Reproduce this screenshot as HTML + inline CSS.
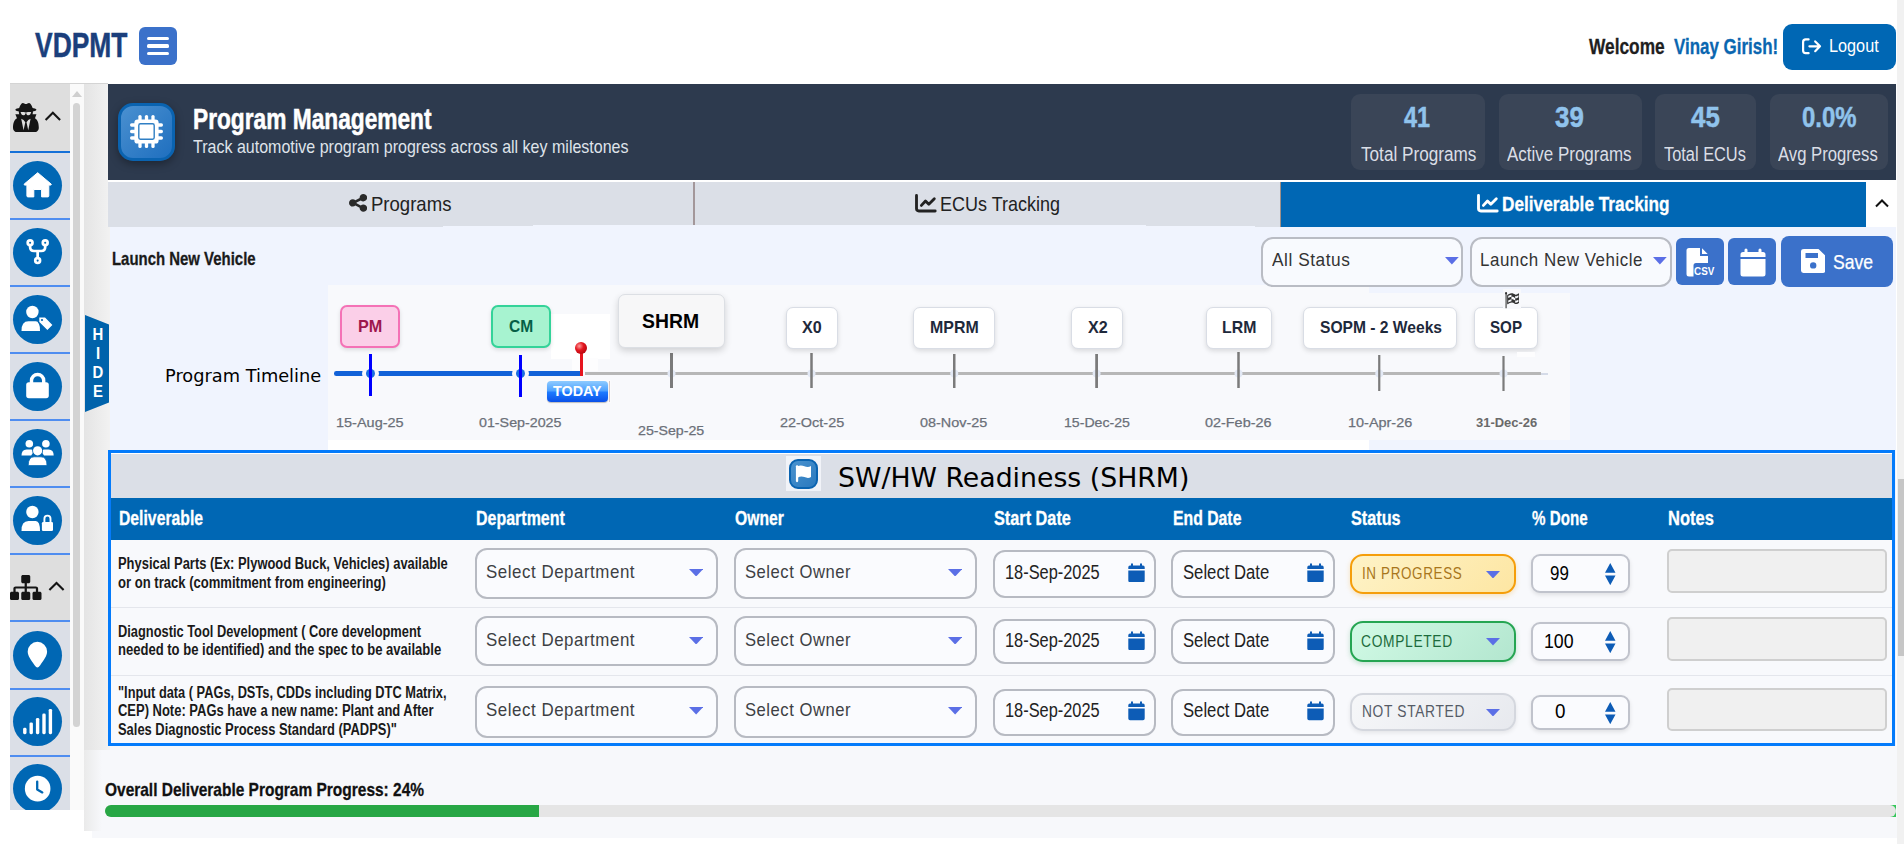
<!DOCTYPE html>
<html lang="en"><head><meta charset="utf-8"><title>VDPMT - Program Management</title>
<style>
html,body{margin:0;padding:0;}
body{width:1904px;height:844px;overflow:hidden;background:#fff;position:relative;font-family:"Liberation Sans",sans-serif;}
div,span.t,svg{position:absolute;box-sizing:border-box;}
span.t{white-space:nowrap;line-height:1;transform-origin:0 0;display:block;}
</style></head>
<body>
<div style="left:92px;top:746px;width:1805px;height:91.5px;background:#f7f8fb;"></div>
<div style="left:108px;top:226.5px;width:1788px;height:519.5px;background:#f0f4fe;"></div>
<div style="left:1897px;top:0px;width:7px;height:844px;background:#f1f1f1;"></div>
<div style="left:1897.5px;top:478.5px;width:6.5px;height:177.0px;background:#c6c6c6;"></div>
<div style="left:84px;top:84px;width:25.5px;height:665.6px;background:linear-gradient(90deg,#e4e4e4,#f2f2f2);"></div>
<div style="left:84px;top:749.6px;width:18px;height:81.4px;background:linear-gradient(90deg,#eaeaea,#f7f8fb);"></div>
<span class="t" id="t1" style="left:35.06px;top:28.00px;font-size:34.6px;color:#1b3f7c;font-weight:700;transform:scaleX(0.7644);-webkit-text-stroke:0.45px #1b3f7c;">VDPMT</span>
<div style="left:139px;top:27px;width:38px;height:38px;background:#3b71ca;border-radius:6px;"></div>
<div style="left:147px;top:36.5px;width:22px;height:3.5px;background:#fff;border-radius:1.5px;"></div>
<div style="left:147px;top:44px;width:22px;height:3.5px;background:#fff;border-radius:1.5px;"></div>
<div style="left:147px;top:51.5px;width:22px;height:3.5px;background:#fff;border-radius:1.5px;"></div>
<span class="t" id="t2" style="left:1588.77px;top:36.00px;font-size:22px;color:#1f1f1f;font-weight:700;transform:scaleX(0.7870);-webkit-text-stroke:0.3px #1f1f1f;">Welcome</span>
<span class="t" id="t3" style="left:1673.55px;top:36.00px;font-size:22px;color:#0a66b0;font-weight:700;transform:scaleX(0.7694);-webkit-text-stroke:0.3px #0a66b0;">Vinay Girish!</span>
<div style="left:1783px;top:24px;width:113px;height:45.5px;background:#0067b4;border-radius:9px;"></div>
<svg style="left:1801px;top:37px;" width="21" height="19" viewBox="0 0 21 19"><g fill="none" stroke="#fff" stroke-width="2.2" stroke-linecap="round" stroke-linejoin="round"><path d="M7.6 2.4H4.7Q2.1 2.4 2.1 5V13.6Q2.1 16.2 4.7 16.2H7.6"/><path d="M8.4 9.3H18.5M14.2 4.4L19 9.3L14.2 14.2"/></g></svg>
<span class="t" id="t4" style="left:1829.33px;top:37.00px;font-size:18.5px;color:#fff;transform:scaleX(0.8783);">Logout</span>
<div style="left:10px;top:83px;width:98px;height:1px;background:#d4d4d4;"></div>
<div style="left:10px;top:84px;width:60px;height:726px;background:#dbdfe7;"></div>
<div style="left:10px;top:84px;width:60px;height:67px;background:#dedede;"></div>
<div style="left:10px;top:555px;width:60px;height:65px;background:#dedede;"></div>
<div style="left:10px;top:151px;width:60px;height:2.2px;background:#1470d8;"></div>
<div style="left:10px;top:218px;width:60px;height:2.2px;background:#4f8df0;"></div>
<div style="left:10px;top:285px;width:60px;height:2.2px;background:#4f8df0;"></div>
<div style="left:10px;top:352px;width:60px;height:2.2px;background:#4f8df0;"></div>
<div style="left:10px;top:419px;width:60px;height:2.2px;background:#4f8df0;"></div>
<div style="left:10px;top:486px;width:60px;height:2.2px;background:#4f8df0;"></div>
<div style="left:10px;top:553px;width:60px;height:2.2px;background:#4f8df0;"></div>
<div style="left:10px;top:620.3px;width:60px;height:2.2px;background:#4f8df0;"></div>
<div style="left:10px;top:687.5px;width:60px;height:2.2px;background:#4f8df0;"></div>
<div style="left:10px;top:754.7px;width:60px;height:2.2px;background:#4f8df0;"></div>
<div style="left:70px;top:84px;width:14px;height:726px;background:#fafafa;"></div>
<div style="left:73px;top:103px;width:7px;height:624px;background:#d3d3d3;border-radius:3.5px;"></div>
<svg style="left:72px;top:91px;" width="10" height="6" viewBox="0 0 10 6"><path d="M0 6L5 0L10 6z" fill="#cfcfcf"/></svg>
<div style="left:12.9px;top:161.1px;width:49.0px;height:49.0px;background:#0067b4;border-radius:50%;"></div>
<div style="left:12.9px;top:227.9px;width:49.0px;height:49.0px;background:#0067b4;border-radius:50%;"></div>
<div style="left:12.9px;top:294.9px;width:49.0px;height:49.0px;background:#0067b4;border-radius:50%;"></div>
<div style="left:12.9px;top:361.9px;width:49.0px;height:49.0px;background:#0067b4;border-radius:50%;"></div>
<div style="left:12.9px;top:428.9px;width:49.0px;height:49.0px;background:#0067b4;border-radius:50%;"></div>
<div style="left:12.9px;top:495.9px;width:49.0px;height:49.0px;background:#0067b4;border-radius:50%;"></div>
<div style="left:12.9px;top:630.7px;width:49.0px;height:49.0px;background:#0067b4;border-radius:50%;"></div>
<div style="left:12.9px;top:697.4px;width:49.0px;height:49.0px;background:#0067b4;border-radius:50%;"></div>
<div style="left:12.9px;top:763.8px;width:49px;height:45.8px;overflow:hidden;"><div style="left:0;top:0;width:49px;height:49px;background:#0067b4;border-radius:50%;"></div></div>
<svg style="left:12.8px;top:102.5px;" width="25.8" height="29.4" viewBox="0.0 -1536.0 1408.0 1664.0" preserveAspectRatio="none"><path transform="scale(1,-1)" fill="#151515" d="M576 0 448 640 576 576 672 448ZM832 0 736 448 832 576 960 640ZM992 1010C991 1001 990 992 988 983C982 975 977 978 973 966C947 895 935 840 845 840C716 840 752 959 710 959H698C656 959 692 840 563 840C473 840 461 895 435 966C431 978 426 975 420 983C418 992 417 1001 416 1010C417 1012 418 1014 420 1016C429 1023 501 1024 516 1024C573 1024 627 1016 683 1005C690 1003 697 1003 704 1003C711 1003 718 1003 725 1005C781 1016 835 1024 892 1024C907 1024 979 1023 988 1016C990 1014 991 1012 992 1010ZM1408 131C1408 309 1377 578 1198 671L1280 896H1066C1084 948 1091 1002 1086 1056C1125 1064 1280 1096 1280 1152C1280 1211 1110 1243 1070 1251C1049 1326 999 1440 948 1499C928 1522 903 1536 872 1536C812 1536 764 1474 704 1474C644 1474 596 1536 536 1536C505 1536 480 1522 460 1499C409 1440 359 1326 338 1251C298 1243 128 1211 128 1152C128 1096 283 1064 322 1056C321 1046 320 1035 320 1024C320 980 328 937 342 896H128L218 676C32 586 0 312 0 131C0 -32 107 -128 267 -128H1141C1301 -128 1408 -32 1408 131Z"/></svg>
<svg style="left:0px;top:84px;" width="84" height="760" viewBox="0 84 84 760"><g fill="none" stroke="#151515" stroke-width="2.1"><path d="M45.6 120L52.85 112.8L60.1 120"/><path d="M49.4 590L56.5 582.9L63.6 590"/></g><path transform="translate(23 171.9)" fill="#fff" stroke="#fff" stroke-width="1" stroke-linejoin="round" d="M14.7 0.8L28.2 12.2Q28.6 13 27.6 13.2H25.8V24Q25.8 25 24.8 25H18.6V17.6H10.8V25H4.9Q3.9 25 3.9 24V13.2H1.8Q0.8 13 1.2 12.2z"/><g transform="translate(26.5 239)" fill="none" stroke="#fff" stroke-width="2.7"><circle cx="3.6" cy="3.7" r="2.4"/><circle cx="18.7" cy="3.7" r="2.4"/><circle cx="11.15" cy="21.6" r="2.4"/><path d="M3.6 6.6V8Q3.6 12 7.6 12H14.7Q18.7 12 18.7 8V6.6M11.15 12V18.8"/></g><circle cx="32.4" cy="312" r="6.2" fill="#fff"/><path d="M21.5 331Q21.3 321.2 28.5 321.2H35.8Q40 321.2 40 331z" fill="#fff"/><path d="M38.6 316.8H45.3L53.4 324.9L47.4 330.9L38.6 322.3z" fill="#fff" stroke="#0067b4" stroke-width="1.4" stroke-linejoin="round"/><circle cx="42" cy="320" r="1.1" fill="#0067b4"/><rect x="26.2" y="382.3" width="22.6" height="15.9" rx="2.6" fill="#fff"/><path d="M31.5 384V380.6A6.1 6.1 0 0 1 43.7 380.6V384" fill="none" stroke="#fff" stroke-width="3.4"/><circle cx="32.4" cy="512" r="6.2" fill="#fff"/><path d="M21.5 531Q21.3 521 28.5 521H35.8Q40 521 40 531z" fill="#fff"/><rect x="41" y="521.2" width="12.8" height="10.6" rx="1.6" fill="#0067b4"/><rect x="41.9" y="521.9" width="11.1" height="9.1" rx="1.3" fill="#fff"/><path d="M44.4 522.5V518.7A3.05 3.05 0 0 1 50.5 518.7V522.5" fill="none" stroke="#fff" stroke-width="1.9"/><g fill="#fff"><circle cx="29.3" cy="443.7" r="3.8"/><circle cx="45.9" cy="443.7" r="3.8"/><path d="M21.5 455.6Q21.5 449.6 26.6 449.6H31.2Q33.2 449.6 33.8 451.6L31.2 455.6z"/><path d="M53.7 455.6Q53.7 449.6 48.6 449.6H44Q42 449.6 41.4 451.6L44 455.6z"/><circle cx="37.6" cy="450.8" r="5.4" fill="#0067b4"/><circle cx="37.6" cy="450.8" r="4.6"/><path d="M28.2 465.6Q28.2 456.8 34.2 456.8H41Q47 456.8 47 465.6z" stroke="#0067b4" stroke-width="0.8"/></g><path d="M37.4 667.6Q36.2 667.6 34.6 665.2C31 660 27.7 656 27.7 651.5A9.7 9.7 0 0 1 47.1 651.5C47.1 656 43.8 660 40.2 665.2Q38.6 667.6 37.4 667.6z" fill="#fff"/><rect x="23.1" y="727.8" width="3.4" height="6.4" rx="1.4" fill="#fff"/><rect x="29.5" y="722.4" width="3.4" height="11.8" rx="1.4" fill="#fff"/><rect x="35.9" y="717.9" width="3.4" height="16.3" rx="1.4" fill="#fff"/><rect x="42.3" y="713.6" width="3.4" height="20.6" rx="1.4" fill="#fff"/><rect x="48.7" y="708.9" width="3.4" height="25.3" rx="1.4" fill="#fff"/><circle cx="37.65" cy="788.65" r="12.8" fill="#fff"/><path d="M37.2 781.6V789.4L42.3 792.4" fill="none" stroke="#0067b4" stroke-width="2.3" stroke-linecap="round" stroke-linejoin="round"/></svg>
<svg style="left:10.4px;top:574.5px;" width="31.5" height="25.1" viewBox="0.0 -1408.0 1792.0 1536.0" preserveAspectRatio="none"><path transform="scale(1,-1)" fill="#151515" d="M1792 288C1792 341 1749 384 1696 384H1600V576C1600 646 1542 704 1472 704H960V896H1056C1109 896 1152 939 1152 992V1312C1152 1365 1109 1408 1056 1408H736C683 1408 640 1365 640 1312V992C640 939 683 896 736 896H832V704H320C250 704 192 646 192 576V384H96C43 384 0 341 0 288V-32C0 -85 43 -128 96 -128H416C469 -128 512 -85 512 -32V288C512 341 469 384 416 384H320V576H832V384H736C683 384 640 341 640 288V-32C640 -85 683 -128 736 -128H1056C1109 -128 1152 -85 1152 -32V288C1152 341 1109 384 1056 384H960V576H1472V384H1376C1323 384 1280 341 1280 288V-32C1280 -85 1323 -128 1376 -128H1696C1749 -128 1792 -85 1792 -32Z"/></svg>
<svg style="left:85px;top:315px;" width="24" height="97" viewBox="0 0 24 97"><path d="M0 0L24 9.5V87.5L0 97z" fill="#0063ab"/></svg>
<span class="t" id="t5" style="left:85.85px;top:327.00px;font-size:16px;color:#fff;font-weight:700;width:24px;text-align:center;transform:scaleX(.93);transform-origin:50% 0;">H</span>
<span class="t" id="t6" style="left:85.85px;top:346.00px;font-size:16px;color:#fff;font-weight:700;width:24px;text-align:center;transform:scaleX(.93);transform-origin:50% 0;">I</span>
<span class="t" id="t7" style="left:85.85px;top:365.00px;font-size:16px;color:#fff;font-weight:700;width:24px;text-align:center;transform:scaleX(.93);transform-origin:50% 0;">D</span>
<span class="t" id="t8" style="left:85.85px;top:384.00px;font-size:16px;color:#fff;font-weight:700;width:24px;text-align:center;transform:scaleX(.93);transform-origin:50% 0;">E</span>
<div style="left:108px;top:84px;width:1788px;height:96px;background:#2d3a4e;"></div>
<div style="left:118px;top:103px;width:57px;height:57.5px;background:linear-gradient(135deg,#4a90d0,#1f6fbf);border:3px solid #0a63b0;border-radius:15px;box-shadow:0 3px 8px rgba(0,0,0,.35);"></div>
<svg style="left:129.8px;top:115.3px;" width="33" height="33" viewBox="-16.5 -16.5 33 33"><g fill="#fff"><rect x="-12.1" y="-12.1" width="24.2" height="24.2" rx="3.2"/><rect x="-8.15" y="-16.5" width="3.3" height="33" rx="1.6"/><rect x="-16.5" y="-8.15" width="33" height="3.3" rx="1.6"/><rect x="-1.65" y="-16.5" width="3.3" height="33" rx="1.6"/><rect x="-16.5" y="-1.65" width="33" height="3.3" rx="1.6"/><rect x="4.85" y="-16.5" width="3.3" height="33" rx="1.6"/><rect x="-16.5" y="4.85" width="33" height="3.3" rx="1.6"/></g><rect x="-7.7" y="-7.7" width="15.4" height="15.4" rx="1.6" fill="none" stroke="#2f7fc4" stroke-width="1.4"/></svg>
<span class="t" id="t9" style="left:193.18px;top:104.00px;font-size:29.6px;color:#fff;font-weight:700;transform:scaleX(0.7675);-webkit-text-stroke:0.55px #fff;">Program Management</span>
<span class="t" id="t10" style="left:193.18px;top:137.00px;font-size:19px;color:#dfe3ea;transform:scaleX(0.8429);">Track automotive program progress across all key milestones</span>
<div style="left:1351px;top:94px;width:134px;height:76px;background:#3a4557;border-radius:9px;"></div>
<span class="t" id="t11" style="left:1403.63px;top:102.00px;font-size:30.2px;color:#90c3ec;font-weight:700;transform:scaleX(0.7764);-webkit-text-stroke:0.5px #90c3ec;">41</span>
<span class="t" id="t12" style="left:1360.54px;top:145.00px;font-size:19.5px;color:#dadee6;transform:scaleX(0.8800);">Total Programs</span>
<div style="left:1499px;top:94px;width:143px;height:76px;background:#3a4557;border-radius:9px;"></div>
<span class="t" id="t13" style="left:1555.41px;top:102.00px;font-size:30.2px;color:#90c3ec;font-weight:700;transform:scaleX(0.8568);-webkit-text-stroke:0.5px #90c3ec;">39</span>
<span class="t" id="t14" style="left:1507.43px;top:145.00px;font-size:19.5px;color:#dadee6;transform:scaleX(0.8706);">Active Programs</span>
<div style="left:1655px;top:94px;width:101px;height:76px;background:#3a4557;border-radius:9px;"></div>
<span class="t" id="t15" style="left:1691.09px;top:102.00px;font-size:30.2px;color:#90c3ec;font-weight:700;transform:scaleX(0.8565);-webkit-text-stroke:0.5px #90c3ec;">45</span>
<span class="t" id="t16" style="left:1664.17px;top:145.00px;font-size:19.5px;color:#dadee6;transform:scaleX(0.8395);">Total ECUs</span>
<div style="left:1770px;top:94px;width:118px;height:76px;background:#3a4557;border-radius:9px;"></div>
<span class="t" id="t17" style="left:1801.54px;top:102.00px;font-size:30.2px;color:#90c3ec;font-weight:700;transform:scaleX(0.7909);-webkit-text-stroke:0.5px #90c3ec;">0.0%</span>
<span class="t" id="t18" style="left:1778.43px;top:145.00px;font-size:19.5px;color:#dadee6;transform:scaleX(0.8550);">Avg Progress</span>
<div style="left:108px;top:180px;width:1788px;height:2px;background:#fff;"></div>
<div style="left:108px;top:182px;width:1173px;height:44.5px;background:#dbdfe7;"></div>
<div style="left:443px;top:225.5px;width:89.5px;height:1.5px;background:#f0f4fe;"></div>
<div style="left:532.5px;top:224.5px;width:613.5px;height:2.5px;background:#f0f4fe;"></div>
<div style="left:1146px;top:225.5px;width:108.5px;height:1.5px;background:#f0f4fe;"></div>
<div style="left:693.2px;top:182px;width:1.5px;height:42.5px;background:#a3979a;"></div>
<div style="left:1279.5px;top:182px;width:1.5px;height:44.5px;background:#a09088;"></div>
<div style="left:1281px;top:182px;width:585px;height:44.75px;background:#0067b4;"></div>
<div style="left:1866px;top:182px;width:30px;height:44.75px;background:#fff;"></div>
<svg style="left:1874px;top:197px;" width="16" height="12" viewBox="0 0 16 12"><path d="M2 9.5L8 3.5L14 9.5" fill="none" stroke="#111" stroke-width="2"/></svg>
<svg style="left:349px;top:194.1px;" width="18.2" height="17.8" viewBox="0.0 -1408.0 1536.0 1536.0" preserveAspectRatio="none"><path transform="scale(1,-1)" fill="#2a2a2a" d="M1216 512C1132 512 1055 479 998 426L638 606C639 617 640 629 640 640C640 651 639 663 638 674L998 854C1055 801 1132 768 1216 768C1393 768 1536 911 1536 1088C1536 1265 1393 1408 1216 1408C1039 1408 896 1265 896 1088C896 1077 897 1065 898 1054L538 874C481 927 404 960 320 960C143 960 0 817 0 640C0 463 143 320 320 320C404 320 481 353 538 406L898 226C897 215 896 203 896 192C896 15 1039 -128 1216 -128C1393 -128 1536 15 1536 192C1536 369 1393 512 1216 512Z"/></svg>
<span class="t" id="t19" style="left:371.41px;top:193.00px;font-size:21px;color:#222;transform:scaleX(0.8834);">Programs</span>
<svg style="left:914.5px;top:194px;" width="22" height="19" viewBox="0 0 22 19"><g fill="none" stroke="#222" stroke-width="2.85" stroke-linecap="round" stroke-linejoin="round"><path d="M1.5 1.5V14.6Q1.5 17 3.9 17H20.2"/><path d="M6.4 11.4L10.5 7L13.8 10.2L19.3 4.8"/></g></svg>
<span class="t" id="t20" style="left:939.74px;top:193.00px;font-size:21px;color:#222;transform:scaleX(0.8566);">ECUs Tracking</span>
<svg style="left:1477px;top:194px;" width="22" height="19" viewBox="0 0 22 19"><g fill="none" stroke="#fff" stroke-width="2.85" stroke-linecap="round" stroke-linejoin="round"><path d="M1.5 1.5V14.6Q1.5 17 3.9 17H20.2"/><path d="M6.4 11.4L10.5 7L13.8 10.2L19.3 4.8"/></g></svg>
<span class="t" id="t21" style="left:1502.47px;top:193.00px;font-size:21px;color:#fff;font-weight:700;transform:scaleX(0.8207);-webkit-text-stroke:0.3px #fff;">Deliverable Tracking</span>
<div style="left:328px;top:285px;width:1041px;height:155px;background:#f8f9fc;"></div>
<div style="left:1369px;top:292.5px;width:201px;height:147.5px;background:#f8f9fc;"></div>
<span class="t" id="t22" style="left:112.40px;top:249.00px;font-size:19px;color:#1a1a1a;font-weight:700;transform:scaleX(0.7861);-webkit-text-stroke:0.3px #1a1a1a;">Launch New Vehicle</span>
<div style="left:1261px;top:236.5px;width:202px;height:50.0px;background:#f8fafe;border:2px solid #b9bcc4;border-radius:12px;"></div>
<div style="left:1469.5px;top:236.5px;width:202.0px;height:50.0px;background:#f8fafe;border:2px solid #b9bcc4;border-radius:12px;"></div>
<span class="t" id="t23" style="left:1272.42px;top:250.00px;font-size:19px;color:#333;transform:scaleX(0.9082);letter-spacing:.6px;">All Status</span>
<span class="t" id="t24" style="left:1480.01px;top:250.00px;font-size:19px;color:#333;transform:scaleX(0.8906);letter-spacing:.6px;">Launch New Vehicle</span>
<svg style="left:1445px;top:257px;" width="13.75" height="7.5" viewBox="0 0 13.75 7.5"><path d="M0 0H13.75L6.875 7.5z" fill="#5b6fe6"/></svg>
<svg style="left:1653px;top:257px;" width="13.75" height="7.5" viewBox="0 0 13.75 7.5"><path d="M0 0H13.75L6.875 7.5z" fill="#5b6fe6"/></svg>
<div style="left:1676px;top:238px;width:48px;height:47px;background:#3b71ca;border-radius:6px;"></div>
<div style="left:1728px;top:238px;width:48px;height:47px;background:#3b71ca;border-radius:6px;"></div>
<div style="left:1781px;top:236px;width:112px;height:51px;background:#3b71ca;border-radius:8px;"></div>
<svg style="left:1686px;top:247.5px;" width="29" height="29" viewBox="0 0 29 29"><path d="M3 0H14V8H22V15H10Q7.5 15 7.5 17.5V28.5H3Q0.5 28.5 0.5 26V2.5Q0.5 0 3 0zM16 0.3L21.7 6H16z" fill="#fff"/></svg>
<span class="t" id="t25" style="left:1693.83px;top:266.00px;font-size:11px;color:#fff;font-weight:700;transform:scaleX(0.8972);">CSV</span>
<svg style="left:1739.5px;top:247.5px;" width="26" height="29" viewBox="0 0 26 29"><path d="M6 0.5Q7.5 0.5 7.5 2V4H18.5V2Q18.5 0.5 20 0.5T21.5 2V4H23Q25.5 4 25.5 6.5V9H0.5V6.5Q0.5 4 3 4H4.5V2Q4.5 0.5 6 0.5zM0.5 11H25.5V26Q25.5 28.5 23 28.5H3Q0.5 28.5 0.5 26z" fill="#fff"/></svg>
<svg style="left:1800.6px;top:249px;" width="24.4" height="24" viewBox="0 0 24.4 24"><path fill-rule="evenodd" d="M3 0H17.5L24.4 6.5V21.5Q24.4 24 21.9 24H2.5Q0 24 0 21.5V2.5Q0 0 3 0zM4.5 4V9H17V4zM12.2 13.2A3.2 3.2 0 1 0 12.2 19.6A3.2 3.2 0 1 0 12.2 13.2z" fill="#fff"/></svg>
<span class="t" id="t26" style="left:1833.25px;top:251.00px;font-size:21px;color:#fff;transform:scaleX(0.8393);-webkit-text-stroke:0.25px #fff;">Save</span>
<div style="left:328px;top:440px;width:1041px;height:10px;background:#fff;"></div>
<span class="t" id="t27" style="left:164.51px;top:367.00px;font-size:18.5px;color:#000;font-family:'DejaVu Sans','Liberation Sans',sans-serif;transform:scaleX(0.9606);">Program Timeline</span>
<div style="left:551px;top:314px;width:59px;height:44.5px;background:#fff;"></div>
<div style="left:572.4px;top:358px;width:25.8px;height:12.5px;background:#fdfdfe;"></div>
<div style="left:585px;top:371.8px;width:956px;height:3.4px;background:#b7b7b7;"></div>
<div style="left:1541px;top:372.6px;width:7px;height:2.8px;background:#d5dbe8;"></div>
<div style="left:334px;top:371.1px;width:247px;height:4.6px;background:#1262d8;border-radius:2.3px 0 0 2.3px;"></div>
<div style="left:362.1px;top:365px;width:16.8px;height:17px;background:#f8f9fc;border-radius:50%;"></div>
<div style="left:365.9px;top:368.9px;width:9.2px;height:9.2px;background:#1a6fe0;border-radius:50%;"></div>
<div style="left:512.1px;top:365px;width:16.8px;height:17px;background:#f8f9fc;border-radius:50%;"></div>
<div style="left:515.9px;top:368.9px;width:9.2px;height:9.2px;background:#1a6fe0;border-radius:50%;"></div>
<div style="left:369px;top:354px;width:3px;height:41.75px;background:#0000ff;"></div>
<div style="left:519px;top:355px;width:3px;height:41.75px;background:#0000ff;"></div>
<svg style="left:600px;top:340px;" width="960" height="60" viewBox="600 340 960 60"><circle cx="671.5" cy="373.5" r="4" fill="#e3e9f5"/><rect x="670.0" y="353" width="3" height="35" fill="#7b7b7b"/><circle cx="811.5" cy="373.5" r="4" fill="#e3e9f5"/><rect x="810.25" y="353" width="2.5" height="35" fill="#7b7b7b"/><circle cx="954.25" cy="373.5" r="4" fill="#e3e9f5"/><rect x="953.0" y="354" width="2.5" height="34" fill="#7b7b7b"/><circle cx="1096.6" cy="373.5" r="4" fill="#e3e9f5"/><rect x="1095.225" y="354" width="2.75" height="34" fill="#7b7b7b"/><circle cx="1238.5" cy="373.5" r="4" fill="#e3e9f5"/><rect x="1237.25" y="352" width="2.5" height="36" fill="#7b7b7b"/><circle cx="1379.25" cy="373.5" r="4" fill="#e3e9f5"/><rect x="1378.15" y="355" width="2.2" height="36" fill="#7b7b7b"/><circle cx="1503.5" cy="373.5" r="4" fill="#e3e9f5"/><rect x="1502.4" y="356" width="2.2" height="35" fill="#7b7b7b"/></svg>
<div style="left:579.8px;top:352px;width:3.1px;height:23.9px;background:#e6141e;"></div>
<div style="left:575.1px;top:342.1px;width:12.2px;height:12.2px;background:radial-gradient(circle at 36% 34%,#ff9a9a 0,#e3161f 38%,#b3060f 80%,#8e0007 100%);border-radius:50%;"></div>
<div style="left:340px;top:305px;width:60px;height:43px;background:#fbcfe8;border:2px solid #f472b6;border-radius:7px;box-shadow:0 2px 4px rgba(0,0,0,.12);"></div>
<span class="t" id="t28" style="left:357.85px;top:318.00px;font-size:16.5px;color:#9d174d;font-weight:700;transform:scaleX(0.9828);">PM</span>
<div style="left:491px;top:305px;width:60px;height:43px;background:#a7f3d0;border:2px solid #34d399;border-radius:7px;box-shadow:0 2px 4px rgba(0,0,0,.12);"></div>
<span class="t" id="t29" style="left:508.55px;top:318.00px;font-size:16.5px;color:#065f46;font-weight:700;transform:scaleX(0.9421);">CM</span>
<div style="left:618px;top:294px;width:106.5px;height:53.5px;background:#f7f7f8;border:1px solid #dcdfe4;border-radius:7px;box-shadow:0 3px 7px rgba(0,0,0,.16);"></div>
<span class="t" id="t30" style="left:642.21px;top:312.00px;font-size:19.3px;color:#000;font-weight:700;transform:scaleX(1.0049);">SHRM</span>
<div style="left:785.5px;top:307px;width:52.5px;height:41.5px;background:#fff;border:1px solid #d9dde5;border-radius:7px;box-shadow:0 2px 5px rgba(0,0,0,.13);"></div>
<span class="t" id="t31" style="left:802.02px;top:319.00px;font-size:16.3px;color:#1e293b;font-weight:700;transform:scaleX(0.9892);">X0</span>
<div style="left:913px;top:307px;width:82px;height:41.5px;background:#fff;border:1px solid #d9dde5;border-radius:7px;box-shadow:0 2px 5px rgba(0,0,0,.13);"></div>
<span class="t" id="t32" style="left:929.63px;top:319.00px;font-size:16.3px;color:#1e293b;font-weight:700;transform:scaleX(0.9778);">MPRM</span>
<div style="left:1070.5px;top:307px;width:52.5px;height:41.5px;background:#fff;border:1px solid #d9dde5;border-radius:7px;box-shadow:0 2px 5px rgba(0,0,0,.13);"></div>
<span class="t" id="t33" style="left:1087.51px;top:319.00px;font-size:16.3px;color:#1e293b;font-weight:700;transform:scaleX(0.9877);">X2</span>
<div style="left:1206px;top:307px;width:66px;height:41.5px;background:#fff;border:1px solid #d9dde5;border-radius:7px;box-shadow:0 2px 5px rgba(0,0,0,.13);"></div>
<span class="t" id="t34" style="left:1221.60px;top:319.00px;font-size:16.3px;color:#1e293b;font-weight:700;transform:scaleX(0.9738);">LRM</span>
<div style="left:1302.5px;top:307px;width:154.5px;height:41.5px;background:#fff;border:1px solid #d9dde5;border-radius:7px;box-shadow:0 2px 5px rgba(0,0,0,.13);"></div>
<span class="t" id="t35" style="left:1319.59px;top:319.00px;font-size:16.3px;color:#1e293b;font-weight:700;transform:scaleX(0.9585);">SOPM - 2 Weeks</span>
<div style="left:1474px;top:307px;width:64px;height:41.5px;background:#fff;border:1px solid #d9dde5;border-radius:7px;box-shadow:0 2px 5px rgba(0,0,0,.13);"></div>
<span class="t" id="t36" style="left:1489.84px;top:319.00px;font-size:16.3px;color:#1e293b;font-weight:700;transform:scaleX(0.9303);">SOP</span>
<div style="left:1502.7px;top:289px;width:18.3px;height:20px;background:#f8f9fc;"></div>
<div style="left:1517px;top:352px;width:18.3px;height:4.5px;background:#fdfdfe;"></div>
<svg style="left:1504.8px;top:292.4px;" width="14.5" height="16.3" viewBox="64.0 -1408.0 1728.0 1536.0" preserveAspectRatio="none"><path transform="scale(1,-1)" fill="#333" d="M832 536C708 526 564 480 448 426V611C563 668 710 717 832 728V536ZM832 954C708 949 566 897 448 836V1025C558 1086 706 1145 832 1151V954ZM1664 491C1602 458 1482 399 1371 399C1337 399 1307 405 1280 416V604C1267 608 1254 613 1241 619C1126 676 1002 730 851 730C845 730 839 730 832 730V952C849 954 865 955 881 955C1032 955 1126 901 1241 843C1254 837 1267 832 1280 828V604C1414 563 1573 630 1664 675V491ZM1664 918C1573 867 1414 790 1280 828V1024C1305 1018 1331 1016 1358 1016C1472 1016 1584 1064 1664 1107V918ZM320 1280C320 1351 263 1408 192 1408C121 1408 64 1351 64 1280C64 1233 90 1192 128 1170V-96C128 -114 142 -128 160 -128H224C242 -128 256 -114 256 -96V1170C294 1192 320 1233 320 1280ZM1792 1216C1792 1238 1780 1259 1761 1271C1742 1282 1719 1283 1699 1273C1692 1269 1681 1263 1668 1256C1606 1219 1476 1144 1358 1144C1325 1144 1295 1150 1269 1163C1154 1219 1018 1280 851 1280C641 1280 415 1155 351 1117C332 1105 320 1084 320 1062V320C320 297 332 276 352 264C362 259 373 256 384 256C395 256 407 259 417 265C534 336 737 411 881 411C1004 411 1084 371 1185 320L1213 306C1259 283 1312 271 1371 271C1525 271 1676 353 1740 387C1747 391 1753 394 1757 396C1778 407 1792 429 1792 453Z"/></svg>
<div style="left:545.5px;top:380px;width:65.0px;height:23px;background:#fbfbfd;"></div>
<div style="left:608.8px;top:381px;width:0.8px;height:21px;background:#d8c8c4;"></div>
<div style="left:547px;top:380.5px;width:61px;height:21.2px;background:linear-gradient(180deg,#8ecbff 0,#4fa2ff 46%,#1d7aff 54%,#0a50e8 100%);border-radius:4px;box-shadow:0 1px 1px rgba(0,0,0,.25);"></div>
<span class="t" id="t37" style="left:553.42px;top:384.00px;font-size:14.6px;color:#fff;font-weight:700;transform:scaleX(0.9814);">TODAY</span>
<span class="t" id="t38" style="left:335.53px;top:416.00px;font-size:13.4px;color:#6b7079;transform:scaleX(1.0813);-webkit-text-stroke:0.25px #6b7079;">15-Aug-25</span>
<span class="t" id="t39" style="left:479.07px;top:416.00px;font-size:13.4px;color:#6b7079;transform:scaleX(1.0652);-webkit-text-stroke:0.25px #6b7079;">01-Sep-2025</span>
<span class="t" id="t40" style="left:637.79px;top:424.00px;font-size:13.4px;color:#6b7079;transform:scaleX(1.0592);-webkit-text-stroke:0.25px #6b7079;">25-Sep-25</span>
<span class="t" id="t41" style="left:779.84px;top:416.00px;font-size:13.4px;color:#6b7079;transform:scaleX(1.0785);-webkit-text-stroke:0.25px #6b7079;">22-Oct-25</span>
<span class="t" id="t42" style="left:919.55px;top:416.00px;font-size:13.4px;color:#6b7079;transform:scaleX(1.0752);-webkit-text-stroke:0.25px #6b7079;">08-Nov-25</span>
<span class="t" id="t43" style="left:1063.83px;top:416.00px;font-size:13.4px;color:#6b7079;transform:scaleX(1.0547);-webkit-text-stroke:0.25px #6b7079;">15-Dec-25</span>
<span class="t" id="t44" style="left:1205.30px;top:416.00px;font-size:13.4px;color:#6b7079;transform:scaleX(1.0757);-webkit-text-stroke:0.25px #6b7079;">02-Feb-26</span>
<span class="t" id="t45" style="left:1348.29px;top:416.00px;font-size:13.4px;color:#6b7079;transform:scaleX(1.0788);-webkit-text-stroke:0.25px #6b7079;">10-Apr-26</span>
<span class="t" id="t46" style="left:1476.06px;top:417.00px;font-size:12px;color:#6a6a6a;font-weight:700;transform:scaleX(1.0808);">31-Dec-26</span>
<div style="left:108px;top:450px;width:1787px;height:296px;background:#f8f9fc;border:3px solid #047bfb;"></div>
<div style="left:111px;top:453px;width:1781px;height:1px;background:#fff;"></div>
<div style="left:111px;top:454px;width:1781px;height:44px;background:#dbdfe7;"></div>
<div style="left:786px;top:456px;width:35px;height:35px;background:#f1f3f8;"></div>
<div style="left:788.6px;top:459px;width:29.6px;height:29.5px;background:linear-gradient(135deg,#4a93cf,#2b79be);border:2px solid #0a63b0;border-radius:9px;"></div>
<svg style="left:794px;top:463px;" width="20" height="21" viewBox="794 463 20 21"><rect x="795.9" y="465.2" width="2.3" height="17" rx="1.1" fill="#fff"/><path d="M797.4 466.3C800 465 802.4 465.4 804.4 466.3S808.8 467.5 811 466.1V477.1C808.8 478.4 806.4 478 804.4 477.1S800 476.2 797.4 477.7z" fill="#fff"/></svg>
<span class="t" id="t47" style="left:837.60px;top:464.00px;font-size:27px;color:#000;font-family:'DejaVu Sans','Liberation Sans',sans-serif;transform:scaleX(0.9900);">SW/HW Readiness (SHRM)</span>
<div style="left:111px;top:498px;width:1781px;height:41.5px;background:#0067b4;"></div>
<span class="t" id="t48" style="left:118.81px;top:508.00px;font-size:20px;color:#fff;font-weight:700;transform:scaleX(0.7871);-webkit-text-stroke:0.3px #fff;">Deliverable</span>
<span class="t" id="t49" style="left:475.56px;top:508.00px;font-size:20px;color:#fff;font-weight:700;transform:scaleX(0.7995);-webkit-text-stroke:0.3px #fff;">Department</span>
<span class="t" id="t50" style="left:734.74px;top:508.00px;font-size:20px;color:#fff;font-weight:700;transform:scaleX(0.7848);-webkit-text-stroke:0.3px #fff;">Owner</span>
<span class="t" id="t51" style="left:993.56px;top:508.00px;font-size:20px;color:#fff;font-weight:700;transform:scaleX(0.8136);-webkit-text-stroke:0.3px #fff;">Start Date</span>
<span class="t" id="t52" style="left:1172.56px;top:508.00px;font-size:20px;color:#fff;font-weight:700;transform:scaleX(0.7892);-webkit-text-stroke:0.3px #fff;">End Date</span>
<span class="t" id="t53" style="left:1351.07px;top:508.00px;font-size:20px;color:#fff;font-weight:700;transform:scaleX(0.8111);-webkit-text-stroke:0.3px #fff;">Status</span>
<span class="t" id="t54" style="left:1532.27px;top:508.00px;font-size:20px;color:#fff;font-weight:700;transform:scaleX(0.7577);-webkit-text-stroke:0.3px #fff;">% Done</span>
<span class="t" id="t55" style="left:1667.75px;top:508.00px;font-size:20px;color:#fff;font-weight:700;transform:scaleX(0.8259);-webkit-text-stroke:0.3px #fff;">Notes</span>
<div style="left:111px;top:607px;width:1781px;height:1px;background:#e4e6ec;"></div>
<div style="left:111px;top:675px;width:1781px;height:1px;background:#e4e6ec;"></div>
<span class="t" id="t56" style="left:117.54px;top:556.00px;font-size:16px;color:#1a1a1a;font-weight:700;transform:scaleX(0.8080);">Physical Parts (Ex: Plywood Buck, Vehicles) available</span>
<span class="t" id="t57" style="left:118.05px;top:575.00px;font-size:16px;color:#1a1a1a;font-weight:700;transform:scaleX(0.8166);">or on track (commitment from engineering)</span>
<span class="t" id="t58" style="left:117.55px;top:624.00px;font-size:16px;color:#1a1a1a;font-weight:700;transform:scaleX(0.8026);">Diagnostic Tool Development ( Core development</span>
<span class="t" id="t59" style="left:117.54px;top:642.00px;font-size:16px;color:#1a1a1a;font-weight:700;transform:scaleX(0.8150);">needed to be identified) and the spec to be available</span>
<span class="t" id="t60" style="left:117.54px;top:685.00px;font-size:16px;color:#1a1a1a;font-weight:700;transform:scaleX(0.8001);">&quot;Input data ( PAGs, DSTs, CDDs including DTC Matrix,</span>
<span class="t" id="t61" style="left:118.05px;top:703.00px;font-size:16px;color:#1a1a1a;font-weight:700;transform:scaleX(0.8105);">CEP) Note: PAGs have a new name: Plant and After</span>
<span class="t" id="t62" style="left:117.94px;top:722.00px;font-size:16px;color:#1a1a1a;font-weight:700;transform:scaleX(0.8078);">Sales Diagnostic Process Standard (PADPS)&quot;</span>
<div style="left:475px;top:548px;width:243px;height:51px;background:#fafbfe;border:2px solid #b7bac2;border-radius:12px;"></div>
<div style="left:734px;top:548px;width:243px;height:51px;background:#fafbfe;border:2px solid #b7bac2;border-radius:12px;"></div>
<span class="t" id="t63" style="left:485.62px;top:562.00px;font-size:19px;color:#3d3f44;transform:scaleX(0.8896);letter-spacing:.6px;">Select Department</span>
<span class="t" id="t64" style="left:744.68px;top:562.00px;font-size:19px;color:#3d3f44;transform:scaleX(0.8745);letter-spacing:.6px;">Select Owner</span>
<svg style="left:688.75px;top:568.75px;" width="14.25" height="7.5" viewBox="0 0 14.25 7.5"><path d="M0 0H14.25L7.125 7.5z" fill="#5b6fe6"/></svg>
<svg style="left:947.75px;top:568.75px;" width="14.25" height="7.5" viewBox="0 0 14.25 7.5"><path d="M0 0H14.25L7.125 7.5z" fill="#5b6fe6"/></svg>
<div style="left:993.25px;top:550px;width:162.25px;height:47.5px;background:#fafbfe;border:2px solid #b7bac2;border-radius:12px;"></div>
<div style="left:1171.25px;top:550px;width:163.25px;height:47.5px;background:#fafbfe;border:2px solid #b7bac2;border-radius:12px;"></div>
<span class="t" id="t65" style="left:1004.56px;top:562.00px;font-size:20px;color:#222;transform:scaleX(0.8181);">18-Sep-2025</span>
<span class="t" id="t66" style="left:1182.70px;top:562.00px;font-size:20px;color:#222;transform:scaleX(0.8339);">Select Date</span>
<svg style="left:1128px;top:562.75px;" width="17" height="19.5" viewBox="0 0 17 19.5"><path d="M4 0.3Q5 0.3 5 1.3V2.6H12V1.3Q12 0.3 13 0.3T14 1.3V2.6H15Q16.7 2.6 16.7 4.3V6H0.3V4.3Q0.3 2.6 2 2.6H3V1.3Q3 0.3 4 0.3zM0.3 7.4H16.7V17.5Q16.7 19.2 15 19.2H2Q0.3 19.2 0.3 17.5z" fill="#0d5cb6"/></svg>
<svg style="left:1307px;top:562.75px;" width="17" height="19.5" viewBox="0 0 17 19.5"><path d="M4 0.3Q5 0.3 5 1.3V2.6H12V1.3Q12 0.3 13 0.3T14 1.3V2.6H15Q16.7 2.6 16.7 4.3V6H0.3V4.3Q0.3 2.6 2 2.6H3V1.3Q3 0.3 4 0.3zM0.3 7.4H16.7V17.5Q16.7 19.2 15 19.2H2Q0.3 19.2 0.3 17.5z" fill="#0d5cb6"/></svg>
<div style="left:1350px;top:554px;width:165.5px;height:40px;background:linear-gradient(135deg,#fef3c7,#fde6a3);border:2px solid #f59e0b;box-shadow:0 2px 5px rgba(245,158,11,.25);border-radius:13px;"></div>
<span class="t" id="t67" style="left:1361.66px;top:565.00px;font-size:17px;color:#a8761c;transform:scaleX(0.7909);letter-spacing:.8px;">IN PROGRESS</span>
<svg style="left:1486px;top:570.6px;" width="14" height="7.5" viewBox="0 0 14 7.5"><path d="M0 0H14L7.0 7.5z" fill="#5b6fe6"/></svg>
<div style="left:1531.25px;top:554px;width:98.25px;height:38.5px;background:#fafbfe;border:2px solid #c0c3cc;border-radius:9px;box-shadow:0 2px 4px rgba(0,0,0,.10);"></div>
<span class="t" id="t68" style="left:1550.17px;top:564.00px;font-size:19.5px;color:#000;transform:scaleX(0.8684);">99</span>
<svg style="left:1605px;top:562.75px;" width="10.5" height="22.2" viewBox="0 0 10.5 22.2"><path d="M5.25 0L10.5 9.7H0zM0 12.6H10.5L5.25 22.2z" fill="#0d5cb6"/></svg>
<div style="left:1667px;top:549px;width:219.75px;height:43.5px;background:#f0f0f0;border:2px solid #cfcfcf;border-radius:5px;"></div>
<div style="left:475px;top:616px;width:243px;height:50.4px;background:#fafbfe;border:2px solid #b7bac2;border-radius:12px;"></div>
<div style="left:734px;top:616px;width:243px;height:50.4px;background:#fafbfe;border:2px solid #b7bac2;border-radius:12px;"></div>
<span class="t" id="t69" style="left:485.62px;top:630.00px;font-size:19px;color:#3d3f44;transform:scaleX(0.8896);letter-spacing:.6px;">Select Department</span>
<span class="t" id="t70" style="left:744.68px;top:630.00px;font-size:19px;color:#3d3f44;transform:scaleX(0.8745);letter-spacing:.6px;">Select Owner</span>
<svg style="left:688.75px;top:636.75px;" width="14.25" height="7.5" viewBox="0 0 14.25 7.5"><path d="M0 0H14.25L7.125 7.5z" fill="#5b6fe6"/></svg>
<svg style="left:947.75px;top:636.75px;" width="14.25" height="7.5" viewBox="0 0 14.25 7.5"><path d="M0 0H14.25L7.125 7.5z" fill="#5b6fe6"/></svg>
<div style="left:993.25px;top:618.75px;width:162.25px;height:45.5px;background:#fafbfe;border:2px solid #b7bac2;border-radius:12px;"></div>
<div style="left:1171.25px;top:618.75px;width:163.25px;height:45.5px;background:#fafbfe;border:2px solid #b7bac2;border-radius:12px;"></div>
<span class="t" id="t71" style="left:1004.56px;top:630.00px;font-size:20px;color:#222;transform:scaleX(0.8181);">18-Sep-2025</span>
<span class="t" id="t72" style="left:1182.70px;top:630.00px;font-size:20px;color:#222;transform:scaleX(0.8339);">Select Date</span>
<svg style="left:1128px;top:630.5px;" width="17" height="19.5" viewBox="0 0 17 19.5"><path d="M4 0.3Q5 0.3 5 1.3V2.6H12V1.3Q12 0.3 13 0.3T14 1.3V2.6H15Q16.7 2.6 16.7 4.3V6H0.3V4.3Q0.3 2.6 2 2.6H3V1.3Q3 0.3 4 0.3zM0.3 7.4H16.7V17.5Q16.7 19.2 15 19.2H2Q0.3 19.2 0.3 17.5z" fill="#0d5cb6"/></svg>
<svg style="left:1307px;top:630.5px;" width="17" height="19.5" viewBox="0 0 17 19.5"><path d="M4 0.3Q5 0.3 5 1.3V2.6H12V1.3Q12 0.3 13 0.3T14 1.3V2.6H15Q16.7 2.6 16.7 4.3V6H0.3V4.3Q0.3 2.6 2 2.6H3V1.3Q3 0.3 4 0.3zM0.3 7.4H16.7V17.5Q16.7 19.2 15 19.2H2Q0.3 19.2 0.3 17.5z" fill="#0d5cb6"/></svg>
<div style="left:1350px;top:621px;width:165.5px;height:41px;background:linear-gradient(135deg,#d1fae5,#b3e6cf);border:2px solid #25a552;box-shadow:0 2px 5px rgba(34,160,80,.25);border-radius:13px;"></div>
<span class="t" id="t73" style="left:1361.16px;top:633.00px;font-size:17px;color:#1c6b3c;transform:scaleX(0.8129);letter-spacing:.8px;">COMPLETED</span>
<svg style="left:1486px;top:638.1px;" width="14" height="7.5" viewBox="0 0 14 7.5"><path d="M0 0H14L7.0 7.5z" fill="#5b6fe6"/></svg>
<div style="left:1531.25px;top:622px;width:98.25px;height:38.5px;background:#fafbfe;border:2px solid #c0c3cc;border-radius:9px;box-shadow:0 2px 4px rgba(0,0,0,.10);"></div>
<span class="t" id="t74" style="left:1544.19px;top:632.00px;font-size:19.5px;color:#000;transform:scaleX(0.9105);">100</span>
<svg style="left:1605px;top:630.75px;" width="10.5" height="22.2" viewBox="0 0 10.5 22.2"><path d="M5.25 0L10.5 9.7H0zM0 12.6H10.5L5.25 22.2z" fill="#0d5cb6"/></svg>
<div style="left:1667px;top:617px;width:219.75px;height:43.75px;background:#f0f0f0;border:2px solid #cfcfcf;border-radius:5px;"></div>
<div style="left:475px;top:686px;width:243px;height:51.5px;background:#fafbfe;border:2px solid #b7bac2;border-radius:12px;"></div>
<div style="left:734px;top:686px;width:243px;height:51.5px;background:#fafbfe;border:2px solid #b7bac2;border-radius:12px;"></div>
<span class="t" id="t75" style="left:485.62px;top:700.00px;font-size:19px;color:#3d3f44;transform:scaleX(0.8896);letter-spacing:.6px;">Select Department</span>
<span class="t" id="t76" style="left:744.68px;top:700.00px;font-size:19px;color:#3d3f44;transform:scaleX(0.8745);letter-spacing:.6px;">Select Owner</span>
<svg style="left:688.75px;top:707px;" width="14.25" height="7.5" viewBox="0 0 14.25 7.5"><path d="M0 0H14.25L7.125 7.5z" fill="#5b6fe6"/></svg>
<svg style="left:947.75px;top:707px;" width="14.25" height="7.5" viewBox="0 0 14.25 7.5"><path d="M0 0H14.25L7.125 7.5z" fill="#5b6fe6"/></svg>
<div style="left:993.25px;top:688.75px;width:162.25px;height:46.75px;background:#fafbfe;border:2px solid #b7bac2;border-radius:12px;"></div>
<div style="left:1171.25px;top:688.75px;width:163.25px;height:46.75px;background:#fafbfe;border:2px solid #b7bac2;border-radius:12px;"></div>
<span class="t" id="t77" style="left:1004.56px;top:700.00px;font-size:20px;color:#222;transform:scaleX(0.8181);">18-Sep-2025</span>
<span class="t" id="t78" style="left:1182.70px;top:700.00px;font-size:20px;color:#222;transform:scaleX(0.8339);">Select Date</span>
<svg style="left:1128px;top:701.125px;" width="17" height="19.5" viewBox="0 0 17 19.5"><path d="M4 0.3Q5 0.3 5 1.3V2.6H12V1.3Q12 0.3 13 0.3T14 1.3V2.6H15Q16.7 2.6 16.7 4.3V6H0.3V4.3Q0.3 2.6 2 2.6H3V1.3Q3 0.3 4 0.3zM0.3 7.4H16.7V17.5Q16.7 19.2 15 19.2H2Q0.3 19.2 0.3 17.5z" fill="#0d5cb6"/></svg>
<svg style="left:1307px;top:701.125px;" width="17" height="19.5" viewBox="0 0 17 19.5"><path d="M4 0.3Q5 0.3 5 1.3V2.6H12V1.3Q12 0.3 13 0.3T14 1.3V2.6H15Q16.7 2.6 16.7 4.3V6H0.3V4.3Q0.3 2.6 2 2.6H3V1.3Q3 0.3 4 0.3zM0.3 7.4H16.7V17.5Q16.7 19.2 15 19.2H2Q0.3 19.2 0.3 17.5z" fill="#0d5cb6"/></svg>
<div style="left:1350px;top:693px;width:165.5px;height:38px;background:linear-gradient(135deg,#f6f7f9,#e7e9ee);border:2px solid #d4d7de;box-shadow:0 2px 4px rgba(0,0,0,.08);border-radius:13px;"></div>
<span class="t" id="t79" style="left:1361.72px;top:703.00px;font-size:17px;color:#555b66;transform:scaleX(0.8118);letter-spacing:.8px;">NOT STARTED</span>
<svg style="left:1486px;top:708.6px;" width="14" height="7.5" viewBox="0 0 14 7.5"><path d="M0 0H14L7.0 7.5z" fill="#5b6fe6"/></svg>
<div style="left:1531.25px;top:694.5px;width:98.25px;height:35.5px;background:#fafbfe;border:2px solid #c0c3cc;border-radius:9px;box-shadow:0 2px 4px rgba(0,0,0,.10);"></div>
<span class="t" id="t80" style="left:1554.90px;top:702.00px;font-size:19.5px;color:#000;transform:scaleX(0.9641);">0</span>
<svg style="left:1605px;top:701.75px;" width="10.5" height="22.2" viewBox="0 0 10.5 22.2"><path d="M5.25 0L10.5 9.7H0zM0 12.6H10.5L5.25 22.2z" fill="#0d5cb6"/></svg>
<div style="left:1667px;top:688px;width:219.75px;height:42.5px;background:#f0f0f0;border:2px solid #cfcfcf;border-radius:5px;"></div>
<span class="t" id="t81" style="left:104.67px;top:780.00px;font-size:19px;color:#111;font-weight:700;transform:scaleX(0.8142);-webkit-text-stroke:0.3px #111;">Overall Deliverable Program Progress: 24%</span>
<div style="left:105px;top:805.25px;width:1790.5px;height:11.5px;background:#e5e5e5;border-radius:6px 0 0 6px;"></div>
<div style="left:105px;top:805.25px;width:434px;height:11.5px;background:#28a745;border-radius:6px 0 0 6px;"></div>
<div style="left:1889px;top:805.25px;width:6.5px;height:11.5px;overflow:hidden;"><div style="left:-6px;top:0;width:12.5px;height:11.5px;border-radius:6px;box-shadow:0 0 0 6px #34c759;"></div></div>
</body></html>
